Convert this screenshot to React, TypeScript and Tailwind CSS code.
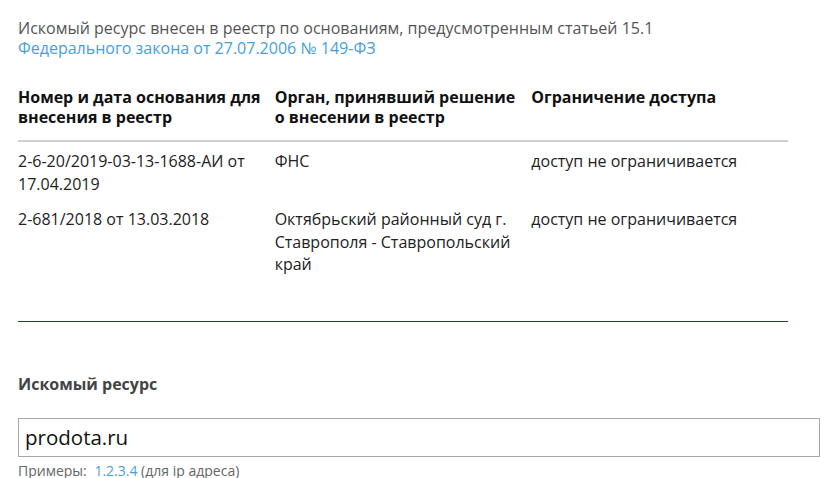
const rows = [
  { basis: '2-6-20/2019-03-13-1688-АИ от 17.04.2019', org: 'ФНС', access: 'доступ не ограничивается' },
  { basis: '2-681/2018 от 13.03.2018', org: 'Октябрьский районный суд г. Ставрополя - Ставропольский край', access: 'доступ не ограничивается' },
]

export default function App() {
  return (
    <div className="min-h-screen bg-white pl-[18px] pr-[13px] pt-[18px] font-['Open_Sans','Noto_Sans',sans-serif] text-[16px]">
      <p className="leading-[20px] text-[#555]">
        Искомый ресурс внесен в реестр по основаниям, предусмотренным статьей 15.1
        <br />
        <a href="#" className="text-[#45a1dc]">Федерального закона от 27.07.2006 № 149-ФЗ</a>
      </p>

      <table className="mt-[29px] w-[770px] table-fixed border-collapse text-left">
        <thead>
          <tr className="border-b-2 border-[#cfcfcf]">
            <th className="pb-[13px] pr-2 align-top font-bold leading-[20px] text-[#111]">Номер и дата основания для внесения в реестр</th>
            <th className="pb-[13px] pr-2 align-top font-bold leading-[20px] text-[#111]">Орган, принявший решение о внесении в реестр</th>
            <th className="pb-[13px] pr-2 align-top font-bold leading-[20px] text-[#111]">Ограничение доступа</th>
          </tr>
        </thead>
        <tbody>
          {rows.map((r) => (
            <tr key={r.basis}>
              <td className="pb-[5px] pr-2 pt-2 align-top leading-[22.5px] text-[#222]">{r.basis}</td>
              <td className="pb-[5px] pr-2 pt-2 align-top leading-[22.5px] text-[#222]">{r.org}</td>
              <td className="pb-[5px] pr-2 pt-2 align-top leading-[22.5px] text-[#222]">{r.access}</td>
            </tr>
          ))}
        </tbody>
      </table>

      <div className="mt-[40px] h-px w-[770px] bg-[#1f3f66]" />

      <div className="mt-[52px] font-bold leading-[20px] text-[#444]">Искомый ресурс</div>

      <div className="mt-[24px] flex h-[39px] w-[802px] items-center border border-[#a8a8a8] px-[6px] text-[20.5px] text-[#111]">
        prodota.ru
      </div>

      <div className="mt-[5px] text-[14px] leading-[18px] text-[#666]">
        Примеры: <a href="#" className="ml-1 text-[#45a1dc]">1.2.3.4</a> (для ip адреса)
      </div>
    </div>
  )
}
